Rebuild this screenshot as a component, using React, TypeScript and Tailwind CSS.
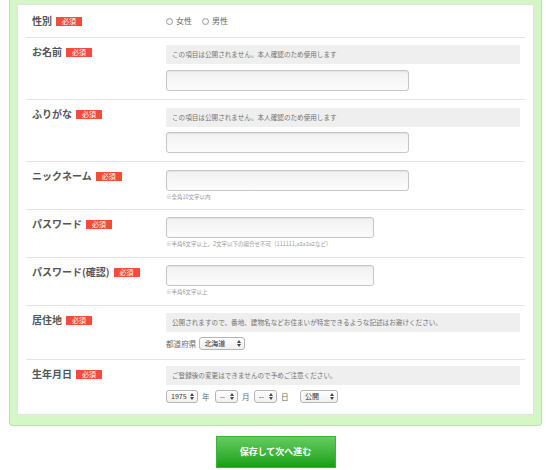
import React from "react";

const font = { fontFamily: '"Noto Sans CJK JP", "Noto Sans", sans-serif' };

function Badge() {
  return (
    <span className="ml-[4px] inline-flex h-[9px] w-[26px] items-center justify-center bg-[#f44c3c] text-[7px] leading-none text-white">
      必須
    </span>
  );
}

function Label({ text, center }: { text: string; center?: boolean }) {
  return (
    <div className={`flex w-[140px] shrink-0 pl-[6px] ${center ? "items-center" : "items-start pt-[7px]"}`}>
      <div className="flex h-[14px] items-center">
        <span className="text-[10px] font-bold leading-[14px] text-[#555]">{text}</span>
        <Badge />
      </div>
    </div>
  );
}

function Info({ text }: { text: string }) {
  return (
    <div className="flex h-[19px] items-center bg-[#efefef] pl-[6px] text-[6.6px] text-[#737373]">{text}</div>
  );
}

function Input({ w }: { w: string }) {
  return (
    <div
      className={`${w} h-[21px] rounded-[3px] border border-[#c6c6c6] bg-gradient-to-b from-[#f1f1f1] to-[#fcfcfc] shadow-[inset_0_1px_1px_rgba(0,0,0,0.06)]`}
    />
  );
}

function Note({ text }: { text: string }) {
  return <div className="mt-[3px] text-[5.5px] leading-[7px] text-[#999]">{text}</div>;
}

function Arrows() {
  return (
    <svg width="4" height="7" viewBox="0 0 4 7" className="shrink-0">
      <path d="M0 3 L2 0 L4 3 Z" fill="#444" />
      <path d="M0 4 L2 7 L4 4 Z" fill="#444" />
    </svg>
  );
}

function Select({ text, w }: { text: string; w: string }) {
  return (
    <div
      className={`${w} inline-flex h-[13px] items-center justify-between rounded-[3px] border border-[#b5b5b5] bg-gradient-to-b from-white to-[#f0f0f0] pl-[4px] pr-[3px] text-[7px] leading-none text-[#333]`}
    >
      <span>{text}</span>
      <Arrows />
    </div>
  );
}

function Radio({ label }: { label: string }) {
  return (
    <span className="inline-flex items-center gap-[3px]">
      <span className="h-[7px] w-[7px] rounded-full border border-[#999] bg-gradient-to-b from-[#f4f4f4] to-white" />
      <span className="text-[8px] leading-none text-[#666]">{label}</span>
    </span>
  );
}

function Row({ children, last }: { children: React.ReactNode; last?: boolean }) {
  return <div className={`flex ${last ? "" : "border-b border-[#e4e4e4]"}`}>{children}</div>;
}

export default function App() {
  const info = "この項目は公開されません。本人確認のため使用します";
  return (
    <div className="h-[470px] w-[551px] overflow-hidden bg-white" style={font}>
      <div className="mx-[9px] rounded-b-[4px] border-x border-b border-[#b9e3a6] bg-[#d5f6c6] px-[7px] pb-[10px] pt-[4px]">
        <div className="rounded-[2px] border border-[#e2e2e2] bg-white px-[8px]">
          <Row>
            <div className="flex h-[32px] w-full">
              <Label text="性別" center />
              <div className="flex items-center gap-[10px]">
                <Radio label="女性" />
                <Radio label="男性" />
              </div>
            </div>
          </Row>
          <Row>
            <Label text="お名前" />
            <div className="flex-1 pb-[8px] pr-[5px] pt-[7px]">
              <Info text={info} />
              <div className="mt-[6px]">
                <Input w="w-[243px]" />
              </div>
            </div>
          </Row>
          <Row>
            <Label text="ふりがな" />
            <div className="flex-1 pb-[8px] pr-[5px] pt-[8px]">
              <Info text={info} />
              <div className="mt-[5px]">
                <Input w="w-[243px]" />
              </div>
            </div>
          </Row>
          <Row>
            <Label text="ニックネーム" />
            <div className="flex-1 pb-[8px] pr-[5px] pt-[8px]">
              <Input w="w-[243px]" />
              <Note text="※全角10文字以内" />
            </div>
          </Row>
          <Row>
            <Label text="パスワード" />
            <div className="flex-1 pb-[9px] pr-[5px] pt-[7px]">
              <Input w="w-[208px]" />
              <Note text="※半角6文字以上。2文字以下の組合せ不可（111111,a2a2a2など）" />
            </div>
          </Row>
          <Row>
            <Label text="パスワード(確認)" />
            <div className="flex-1 pb-[9px] pr-[5px] pt-[7px]">
              <Input w="w-[208px]" />
              <Note text="※半角6文字以上" />
            </div>
          </Row>
          <Row>
            <Label text="居住地" />
            <div className="flex-1 pb-[9px] pr-[5px] pt-[7px]">
              <Info text="公開されますので、番地、建物名などお住まいが特定できるような記述はお避けください。" />
              <div className="mt-[5px] flex items-center gap-[3px]">
                <span className="text-[7.6px] leading-none text-[#666]">都道府県</span>
                <Select text="北海道" w="w-[46px]" />
              </div>
            </div>
          </Row>
          <Row last>
            <Label text="生年月日" />
            <div className="flex-1 pb-[11px] pr-[5px] pt-[6px]">
              <Info text="ご登録後の変更はできませんので予めご注意ください。" />
              <div className="mt-[5px] flex items-center text-[7.6px] leading-none text-[#666]">
                <Select text="1975" w="w-[32px]" />
                <span className="ml-[4px] w-[13px]">年</span>
                <Select text="--" w="w-[23px]" />
                <span className="ml-[4px] w-[12px]">月</span>
                <Select text="--" w="w-[23px]" />
                <span className="ml-[4px] w-[19px]">日</span>
                <Select text="公開" w="w-[38px]" />
              </div>
            </div>
          </Row>
        </div>
      </div>
      <div className="mt-[10px] flex justify-center">
        <button className="flex h-[32px] w-[120px] items-center justify-center border border-[#3fae3f] bg-gradient-to-b from-[#62cd5e] to-[#10a010] text-[9px] font-bold text-white">
          保存して次へ進む
        </button>
      </div>
    </div>
  );
}
